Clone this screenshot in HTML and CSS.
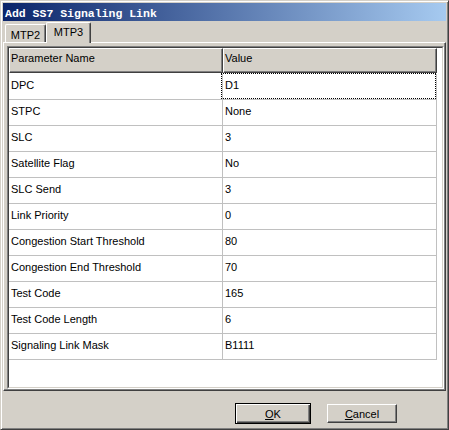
FILE: index.html
```html
<!DOCTYPE html>
<html>
<head>
<meta charset="utf-8">
<title>Add SS7 Signaling Link</title>
<link rel="stylesheet" href="styles.css">
</head>
<body>
<div class="window">
  <div class="titlebar"><span class="title">Add SS7 Signaling Link</span></div>
  <div class="tabs">
    <div class="tab">MTP2</div>
    <div class="tab active">MTP3</div>
  </div>
  <div class="panel">
    <div class="list">
      <div class="list-client">
        <div class="header">
          <div class="hcell">Parameter Name</div>
          <div class="hcell">Value</div>
        </div>
        <div class="rows">
          <div class="row"><div class="cell">DPC</div><div class="cell focus">D1</div></div>
          <div class="row"><div class="cell">STPC</div><div class="cell">None</div></div>
          <div class="row"><div class="cell">SLC</div><div class="cell">3</div></div>
          <div class="row"><div class="cell">Satellite Flag</div><div class="cell">No</div></div>
          <div class="row"><div class="cell">SLC Send</div><div class="cell">3</div></div>
          <div class="row"><div class="cell">Link Priority</div><div class="cell">0</div></div>
          <div class="row"><div class="cell">Congestion Start Threshold</div><div class="cell">80</div></div>
          <div class="row"><div class="cell">Congestion End Threshold</div><div class="cell">70</div></div>
          <div class="row"><div class="cell">Test Code</div><div class="cell">165</div></div>
          <div class="row"><div class="cell">Test Code Length</div><div class="cell">6</div></div>
          <div class="row"><div class="cell">Signaling Link Mask</div><div class="cell">B1111</div></div>
        </div>
      </div>
    </div>
  </div>
  <div class="footer">
    <button class="btn default"><span class="mn">O</span>K</button>
    <button class="btn cancel"><span class="mn">C</span>ancel</button>
  </div>
</div>
</body>
</html>
```

FILE: styles.css
```css
* { box-sizing: border-box; }
html, body { margin: 0; padding: 0; }
body {
  background: #d4d0c8;
  font-family: "Liberation Sans", Arial, sans-serif;
  font-size: 11px;
  color: #000;
}
.window {
  width: 449px;
  height: 430px;
  background: #d4d0c8;
  border: 1px solid;
  border-color: #d4d0c8 #404040 #404040 #d4d0c8;
  box-shadow: inset 1px 1px #fff, inset -1px -1px #808080;
  padding: 2px;
  display: flex;
  flex-direction: column;
}
.titlebar {
  height: 18px;
  flex: none;
  background: linear-gradient(to right, #0a246a, #a6caf0);
  padding: 1px 0 0 2px;
  line-height: 18px;
}
.title {
  color: #fff;
  font-family: "Liberation Mono", "DejaVu Sans Mono", monospace;
  font-weight: bold;
  font-size: 11.5px;
  white-space: nowrap;
}
.tabs {
  height: 21px;
  flex: none;
  display: flex;
  align-items: flex-end;
  padding-left: 2px;
  position: relative;
  z-index: 1;
}
.tab {
  height: 18px;
  width: 41px;
  background: #d4d0c8;
  border-top: 1px solid #fff;
  border-left: 1px solid #fff;
  border-right: 1px solid #404040;
  box-shadow: inset -1px 0 #808080;
  border-radius: 2px 2px 0 0;
  text-align: center;
  line-height: 18px;
  padding-top: 1px;
}
.tab.active {
  height: 21px;
  width: 45px;
  margin-bottom: -1px;
  padding-top: 0;
}
.panel {
  height: 349px;
  flex: none;
  border: 1px solid;
  border-color: #fff #404040 #404040 #fff;
  box-shadow: inset -1px -1px #808080;
  padding: 3px 1px 1px 3px;
}
.list {
  height: 100%;
  border: 1px solid;
  border-color: #808080 #fff #fff #808080;
}
.list-client {
  height: 100%;
  border: 1px solid;
  border-color: #404040 #d4d0c8 #d4d0c8 #404040;
  background: #fff;
}
.header {
  display: flex;
  height: 25px;
}
.hcell {
  width: 214px;
  height: 25px;
  background: #d4d0c8;
  border-top: 1px solid #fff;
  border-left: 1px solid #fff;
  border-right: 1px solid #404040;
  border-bottom: 1px solid #404040;
  box-shadow: inset -1px -1px #808080;
  line-height: 18px;
  padding-left: 1px;
  white-space: nowrap;
}
.rows {
  padding-top: 1px;
}
.row {
  display: flex;
  height: 26px;
}
.cell {
  width: 214px;
  height: 26px;
  border-right: 1px solid #c0c0c0;
  border-bottom: 1px solid #c0c0c0;
  line-height: 23px;
  padding: 0 0 2px 2px;
  white-space: nowrap;
}
.cell.focus {
  position: relative;
}
.cell.focus::after {
  content: "";
  position: absolute;
  left: -2px;
  top: -1px;
  right: 0;
  bottom: 0;
  border: 1px dotted #000;
}
.footer {
  flex: 1;
  display: flex;
  align-items: flex-start;
  padding: 12px 0 0 232px;
  gap: 16px;
}
.btn {
  font-family: "Liberation Sans", Arial, sans-serif;
  font-size: 11px;
  color: #000;
  background: #d4d0c8;
  width: 70px;
  height: 19px;
  margin: 1px 0 0 0;
  padding: 0;
  border: 1px solid;
  border-color: #fff #404040 #404040 #fff;
  box-shadow: inset -1px -1px #808080;
  line-height: 16px;
  text-align: center;
}
.btn.default {
  width: 76px;
  height: 21px;
  margin-top: 0;
  border: 1px solid #000;
  box-shadow: inset 1px 1px #fff, inset -1px -1px #404040, inset -2px -2px #808080;
}
.mn { text-decoration: underline; }
```
